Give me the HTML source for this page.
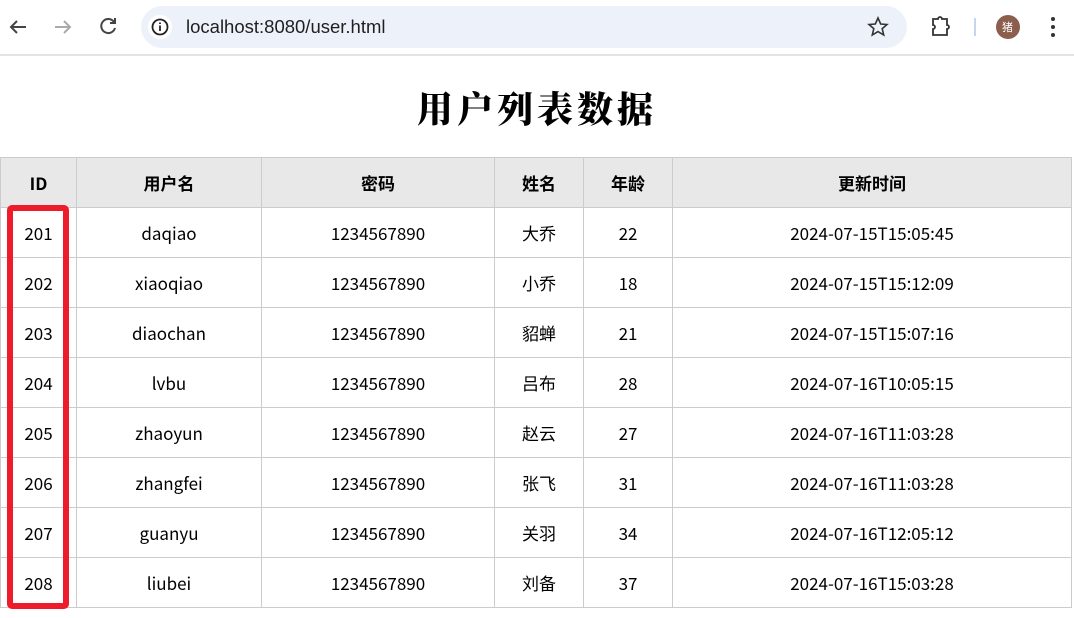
<!DOCTYPE html>
<html><head><meta charset="utf-8"><style>
*{margin:0;padding:0;box-sizing:border-box}
body{width:1074px;height:618px;background:#fff;font-family:"Liberation Sans","Noto Sans CJK SC",sans-serif;position:relative;overflow:hidden}
.bar{position:absolute;left:0;top:0;width:1074px;height:56px;background:#fff;border-bottom:2px solid #e3e3e3}
.url{position:absolute;left:141px;top:6px;width:766px;height:42px;border-radius:21px;background:#edf2fa}
.url span{position:absolute;left:45px;top:10px;font-size:18.5px;color:#1f1f1f}
h1{position:absolute;top:82px;left:0;width:1074px;text-align:center;font-family:"Noto Serif CJK SC",serif;font-size:36px;font-weight:900;letter-spacing:4px}
table{position:absolute;left:0;top:157px;border-collapse:collapse;font-family:"Noto Sans CJK SC",sans-serif;font-size:17px}
td,th{border:1px solid #ccc;height:50px;text-align:center;padding:0}
th{background:#e8e8e8;font-weight:bold;font-size:17px}
.red{position:absolute;left:7px;top:205px;width:62px;height:404px;border:6px solid #ee1c2a;border-radius:5px}
</style></head><body>
<div class="bar">
<div class="url"><span>localhost:8080/user.html</span></div>
<svg width="1074" height="55" style="position:absolute;left:0;top:0" fill="none" stroke-width="2">
<path d="M26 27H11M17 21l-6 6 6 6" stroke="#444"/>
<path d="M55 27h15M64 21l6 6-6 6" stroke="#aaa"/>
<path d="M114 22a7 7 0 1 0 1 6M115 18v5h-5" stroke="#444"/>
<circle cx="160" cy="27" r="12" fill="#fff" stroke="none"/>
<circle cx="160" cy="27" r="7.5" stroke="#222" stroke-width="1.8"/><path d="M160 25.5v5.5M160 22.5v1.5" stroke="#222" stroke-width="1.8"/>
<path d="M878 18l2.7 6 6.3.5-4.8 4.2 1.5 6.3-5.7-3.4-5.7 3.4 1.5-6.3-4.8-4.2 6.3-.5z" stroke="#333" stroke-width="1.6"/>
<path d="M933 19h5a2 2 0 0 1 4 0h5v6a2 2 0 0 1 0 4v6h-14v-6a2 2 0 0 0 0-4z" stroke="#333" stroke-width="1.8"/>
<path d="M975 18v18" stroke="#c6d6f0"/>
<circle cx="1008" cy="27" r="12" fill="#8b5e4e" stroke="none"/>
<circle cx="1053" cy="19" r="2" fill="#333" stroke="none"/><circle cx="1053" cy="27" r="2" fill="#333" stroke="none"/><circle cx="1053" cy="35" r="2" fill="#333" stroke="none"/>
</svg>
<span style="position:absolute;left:1002px;top:19px;font-size:11px;color:#fff;font-family:'Noto Sans CJK SC',sans-serif">猪</span>
</div>
<h1>用户列表数据</h1>
<table>
<colgroup><col style="width:76px"><col style="width:185px"><col style="width:233px"><col style="width:89px"><col style="width:89px"><col style="width:399px"></colgroup>
<tr><th>ID</th><th>用户名</th><th>密码</th><th>姓名</th><th>年龄</th><th>更新时间</th></tr>
<tr><td>201</td><td>daqiao</td><td>1234567890</td><td>大乔</td><td>22</td><td>2024-07-15T15:05:45</td></tr>
<tr><td>202</td><td>xiaoqiao</td><td>1234567890</td><td>小乔</td><td>18</td><td>2024-07-15T15:12:09</td></tr>
<tr><td>203</td><td>diaochan</td><td>1234567890</td><td>貂蝉</td><td>21</td><td>2024-07-15T15:07:16</td></tr>
<tr><td>204</td><td>lvbu</td><td>1234567890</td><td>吕布</td><td>28</td><td>2024-07-16T10:05:15</td></tr>
<tr><td>205</td><td>zhaoyun</td><td>1234567890</td><td>赵云</td><td>27</td><td>2024-07-16T11:03:28</td></tr>
<tr><td>206</td><td>zhangfei</td><td>1234567890</td><td>张飞</td><td>31</td><td>2024-07-16T11:03:28</td></tr>
<tr><td>207</td><td>guanyu</td><td>1234567890</td><td>关羽</td><td>34</td><td>2024-07-16T12:05:12</td></tr>
<tr><td>208</td><td>liubei</td><td>1234567890</td><td>刘备</td><td>37</td><td>2024-07-16T15:03:28</td></tr>
</table>
<div class="red"></div>
</body></html>
